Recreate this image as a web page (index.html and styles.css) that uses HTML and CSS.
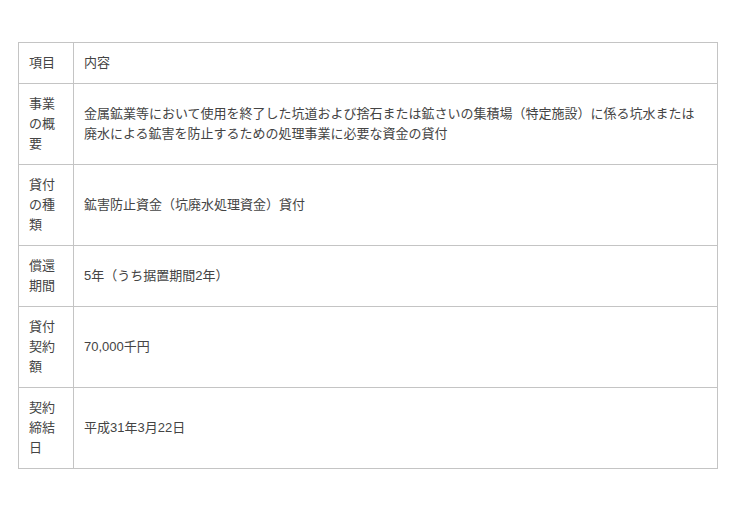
FILE: index.html
```html
<!DOCTYPE html>
<html lang="ja">
<head>
<meta charset="utf-8">
<link rel="stylesheet" href="styles.css">
</head>
<body>
<div class="page">
<table class="info">
<tr><td class="label">項目</td><td>内容</td></tr>
<tr><td class="label">事業の概要</td><td>金属鉱業等において使用を終了した坑道および捨石または鉱さいの集積場（特定施設）に係る坑水または廃水による鉱害を防止するための処理事業に必要な資金の貸付</td></tr>
<tr><td class="label">貸付の種類</td><td>鉱害防止資金（坑廃水処理資金）貸付</td></tr>
<tr><td class="label">償還期間</td><td>5年（うち据置期間2年）</td></tr>
<tr><td class="label">貸付契約額</td><td>70,000千円</td></tr>
<tr><td class="label">契約締結日</td><td>平成31年3月22日</td></tr>
</table>
</div>
</body>
</html>
```
FILE: styles.css
```css
html, body { margin: 0; padding: 0; background: #fff; }
.page { padding: 42px 0 0 18px; }
.info {
  border-collapse: collapse;
  width: 700px;
  font-family: "Liberation Sans", "Noto Sans CJK JP", sans-serif;
  font-size: 13px;
  line-height: 20px;
  color: #444;
}
.info td {
  border: 1px solid #c4c4c4;
  padding: 10px 10px;
  vertical-align: middle;
  text-align: left;
}
.info td.label { width: 34px; }
```
